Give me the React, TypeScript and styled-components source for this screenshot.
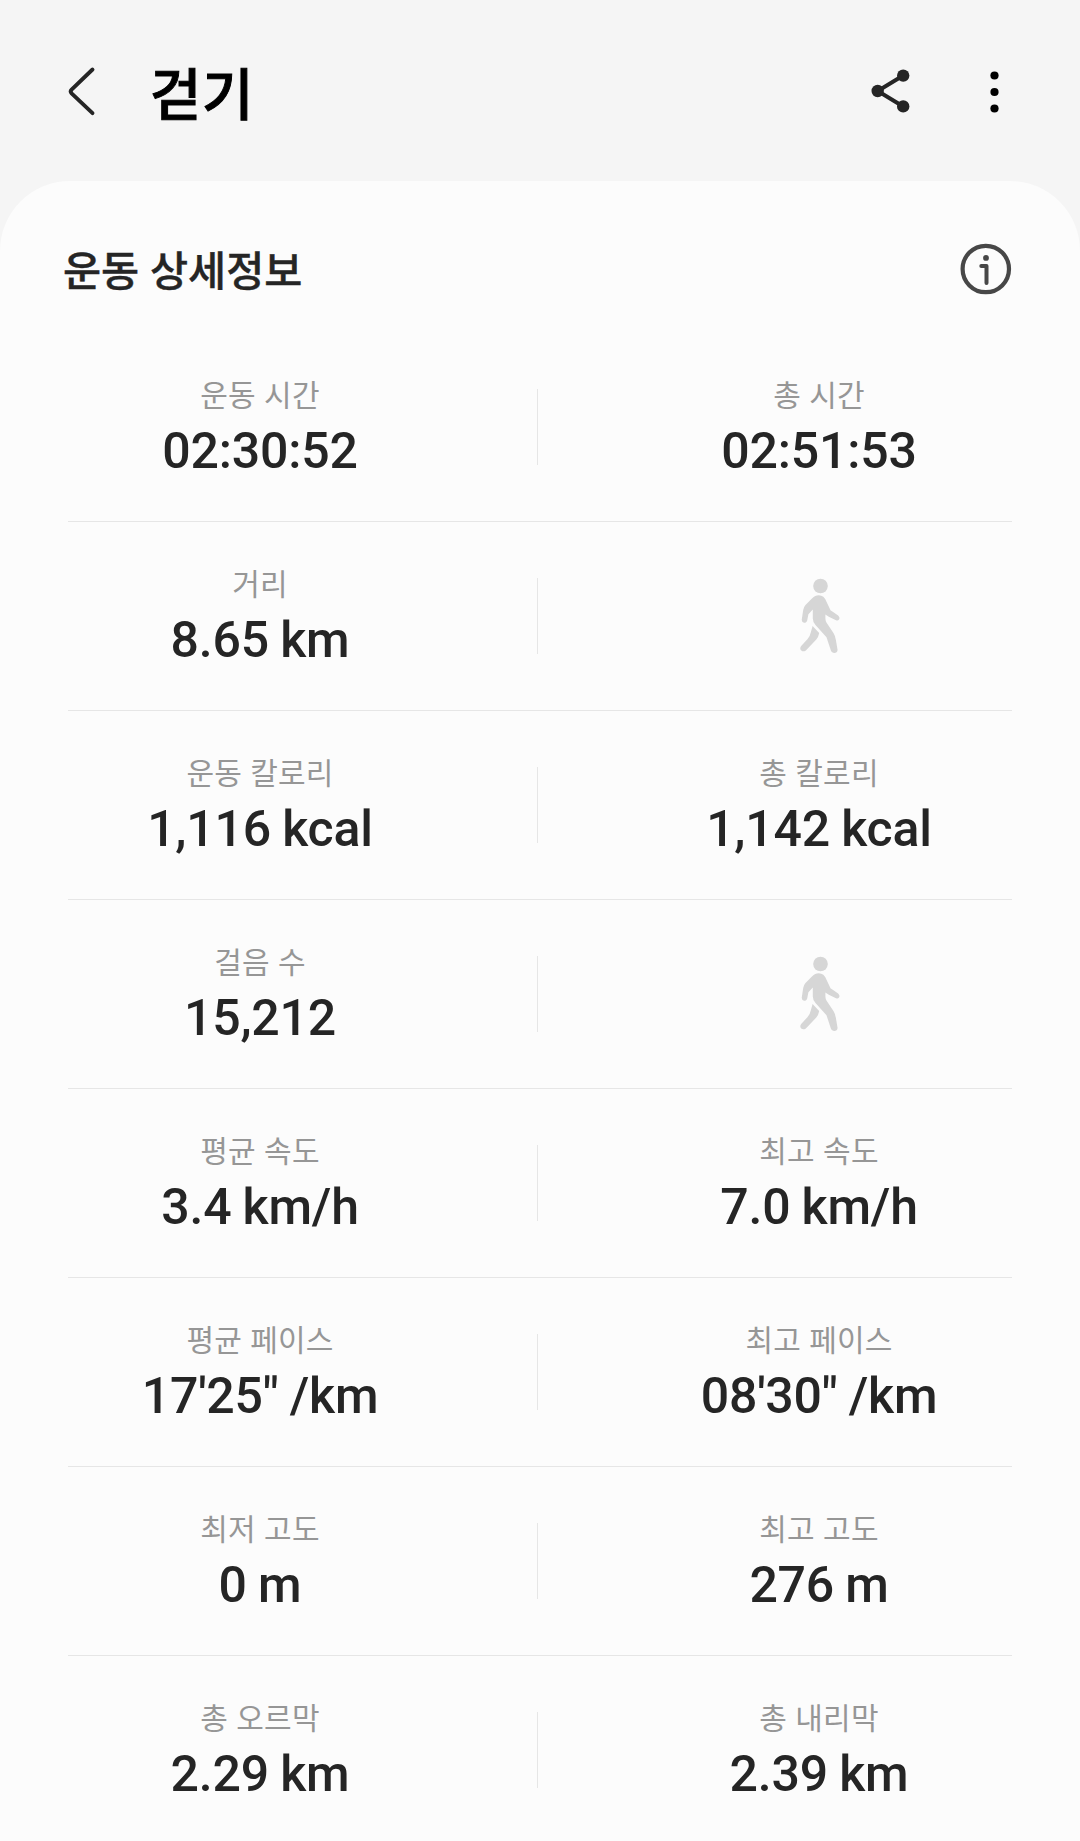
import React from "react";
import styled, { createGlobalStyle } from "styled-components";

const GlobalStyle = createGlobalStyle`
  *, *::before, *::after { box-sizing: border-box; }
  body {
    margin: 0;
    background: #f5f5f5;
    font-family: Roboto, "Noto Sans CJK KR", sans-serif;
  }
`;

const Screen = styled.div`
  display: flex;
  flex-direction: column;
  width: 1080px;
  height: 1841px;
  overflow: hidden;
  background: #f5f5f5;
`;

const AppBar = styled.header`
  display: flex;
  flex: none;
  align-items: center;
  height: 181px;
  padding: 0 54px 0 60px;
`;

const IconButton = styled.button<{ $width: number }>`
  display: flex;
  align-items: center;
  justify-content: center;
  flex: none;
  width: ${(p) => p.$width}px;
  height: 64px;
  padding: 0;
  border: 0;
  background: none;
`;

const PageTitle = styled.h1`
  flex: 1;
  margin: 0;
  padding: 0 0 0 46px;
  font: 500 56px/80px "Noto Sans CJK KR", sans-serif;
  -webkit-text-stroke: 1px #000;
  letter-spacing: 0.5px;
  color: #000;
`;

const Actions = styled.div`
  display: flex;
  gap: 40px;
`;

const Card = styled.main`
  flex: none;
  padding: 0 68px;
  border-radius: 70px 70px 0 0;
  background: #fcfcfc;
`;

const CardHeader = styled.div`
  display: flex;
  align-items: center;
  justify-content: space-between;
  height: 152px;
  margin-left: -5px;
  padding-top: 24px;
`;

const CardTitle = styled.h2`
  margin: 0 0 2px;
  font: 500 41.4px/60px "Noto Sans CJK KR", sans-serif;
  -webkit-text-stroke: 0.4px #252525;
  word-spacing: 1.5px;
  color: #252525;
`;

const Row = styled.section`
  display: grid;
  grid-template-columns: 385px 174px 385px;
  height: 189px;
  border-bottom: 1px solid #e6e6e6;

  &:last-child {
    border-bottom: 0;
  }
`;

const Stat = styled.div`
  display: flex;
  flex-direction: column;
  align-items: center;
  padding: 38px 1px 0 0;
  white-space: nowrap;
`;

const Label = styled.span`
  font: 400 30px/44px "Noto Sans CJK KR", sans-serif;
  letter-spacing: 0.2px;
  word-spacing: 1.3px;
  color: #969696;
`;

const Value = styled.span`
  margin-top: 6px;
  font: 500 50px/60px Roboto, sans-serif;
  letter-spacing: -0.2px;
  word-spacing: -1px;
  color: #252525;
`;

const Divider = styled.div`
  width: 1px;
  height: 76px;
  margin: 56px 0 0 84px;
  background: #e6e6e6;
`;

const Figure = styled.div`
  display: flex;
  justify-content: center;
  padding-top: 56px;
`;

const BackIcon = () => (
  <svg width="44" height="64" viewBox="0 0 44 64" fill="none">
    <path d="M32.5 10.5 11.6 30.6q-1.8 1.9 0 3.8L32.5 54.2" stroke="#252525" strokeWidth="3.9" strokeLinecap="round" />
  </svg>
);

const ShareIcon = () => (
  <svg width="64" height="64" viewBox="0 0 64 64">
    <path d="M45.2 16.5 19.7 32l25.5 15.5" fill="none" stroke="#252525" strokeWidth="4" />
    <g fill="#252525">
      <circle cx="45.2" cy="16.6" r="6.2" />
      <circle cx="19.7" cy="32" r="6.2" />
      <circle cx="45.2" cy="47.4" r="6.2" />
    </g>
  </svg>
);

const MoreIcon = () => (
  <svg width="64" height="64" viewBox="0 0 64 64" fill="#000">
    <circle cx="32.5" cy="16.5" r="4.1" />
    <circle cx="32.5" cy="33" r="4.1" />
    <circle cx="32.5" cy="49.5" r="4.1" />
  </svg>
);

const InfoIcon = () => (
  <svg width="52" height="52" viewBox="0 0 52 52" fill="none" stroke="#474747">
    <circle cx="25.8" cy="26" r="23.2" strokeWidth="4.2" />
    <path d="M21.3 22.9h5.2v17" strokeWidth="4" strokeLinecap="round" strokeLinejoin="round" />
    <circle cx="26" cy="14.9" r="2.9" fill="#474747" stroke="none" />
  </svg>
);

const WalkIcon = () => (
  <svg width="44" height="76" viewBox="0 0 44 76" fill="#d6d6d6">
    <circle cx="22.5" cy="8" r="7.3" />
    <path d="M20.8 17.3C18 17.3 16.2 18.6 14.2 20.3L7.5 26.9Q5.6 29 5.2 32L3.8 41.3C3.4 45.4 8.2 46 9.2 42.4L10.4 36.2 14.8 31.6V40.6Q14.8 44.3 17.5 47L28.5 59.3 32.8 72.3C34 76.6 40.3 75.6 39.5 71.4L37.8 61.5Q37.4 58.4 35.6 55.3L28.6 44.7Q27.4 42.7 27.4 40.5V36.4L30.8 38.7 38 42.3C41.2 43.7 43 39.4 39.8 37.2L32.5 32.3 28.5 23.7Q26 17.3 20.8 17.3Z" />
    <path d="M14.6 48.1 21.2 54.9Q20.5 58.8 18.3 61.5L8.6 71.8C4.9 75.7.1 71.3 3.4 67.7L9.6 60.9Q12.2 58 12.9 53.9Z" />
  </svg>
);

type Metric = { label: string; value: string };

const rows: [Metric, Metric | null][] = [
  [{ label: "운동 시간", value: "02:30:52" }, { label: "총 시간", value: "02:51:53" }],
  [{ label: "거리", value: "8.65 km" }, null],
  [{ label: "운동 칼로리", value: "1,116 kcal" }, { label: "총 칼로리", value: "1,142 kcal" }],
  [{ label: "걸음 수", value: "15,212" }, null],
  [{ label: "평균 속도", value: "3.4 km/h" }, { label: "최고 속도", value: "7.0 km/h" }],
  [{ label: "평균 페이스", value: "17'25\" /km" }, { label: "최고 페이스", value: "08'30\" /km" }],
  [{ label: "최저 고도", value: "0 m" }, { label: "최고 고도", value: "276 m" }],
  [{ label: "총 오르막", value: "2.29 km" }, { label: "총 내리막", value: "2.39 km" }],
];

const MetricCell = ({ metric }: { metric: Metric }) => (
  <Stat>
    <Label>{metric.label}</Label>
    <Value>{metric.value}</Value>
  </Stat>
);

export default function App() {
  return (
    <Screen>
      <GlobalStyle />
      <AppBar>
        <IconButton $width={44} aria-label="뒤로"><BackIcon /></IconButton>
        <PageTitle>걷기</PageTitle>
        <Actions>
          <IconButton $width={64} aria-label="공유"><ShareIcon /></IconButton>
          <IconButton $width={64} aria-label="더보기"><MoreIcon /></IconButton>
        </Actions>
      </AppBar>
      <Card>
        <CardHeader>
          <CardTitle>운동 상세정보</CardTitle>
          <IconButton $width={52} aria-label="정보"><InfoIcon /></IconButton>
        </CardHeader>
        {rows.map(([left, right]) => (
          <Row key={left.label}>
            <MetricCell metric={left} />
            <Divider />
            {right ? <MetricCell metric={right} /> : <Figure><WalkIcon /></Figure>}
          </Row>
        ))}
      </Card>
    </Screen>
  );
}
